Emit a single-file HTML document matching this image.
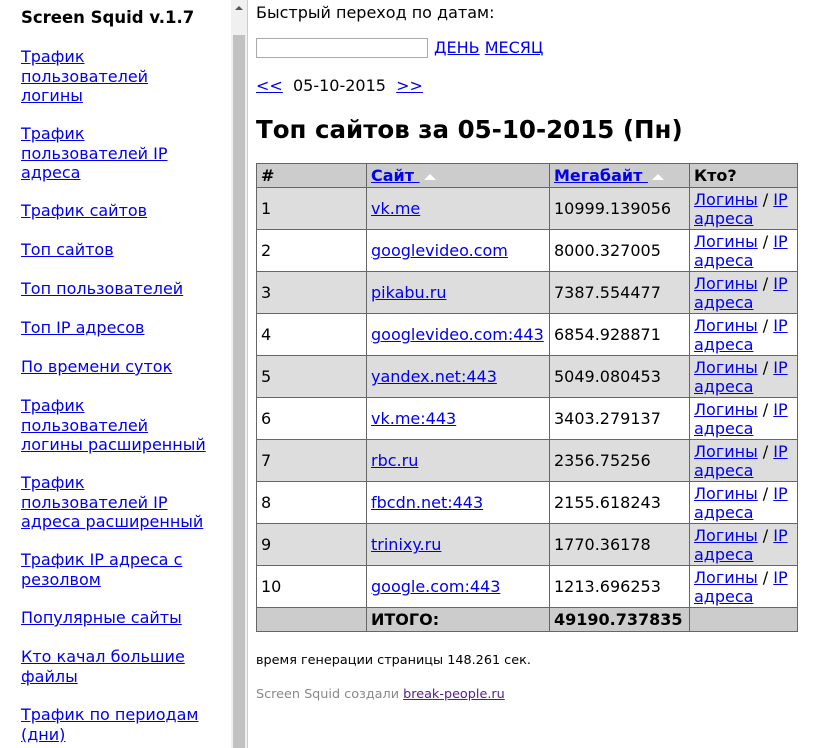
<!DOCTYPE html>
<html><head><meta charset="utf-8"><style>
body{margin:0;width:820px;height:748px;overflow:hidden;font-family:Verdana,"DejaVu Sans",sans-serif;font-size:16px;color:#000;background:#fff;position:relative}
a{color:#0000ee}
#side{position:absolute;left:0;top:0;width:231px;height:748px}
#side h3{position:absolute;left:21px;top:8px;margin:0;font-size:16.5px;white-space:nowrap}
#side .it{position:absolute;left:21px;line-height:19.5px;white-space:nowrap}
#sb{position:absolute;left:231px;top:0;width:16px;height:748px;background:#f0f0f0;border-right:1px solid #ccc}
#sb .th{position:absolute;left:2px;top:35px;width:12px;height:713px;background:#c1c1c1}
#sb .ar{position:absolute;left:4px;top:6px;width:0;height:0;border-left:4px solid transparent;border-right:4px solid transparent;border-bottom:4px solid #555}
#main{position:absolute;left:256px;top:0;width:560px}
.p{position:absolute;left:0;white-space:nowrap}
input{position:absolute;left:0;top:38px;width:168px;height:16px;border:1px solid #aaa;padding:1px;margin:0}
h2{position:absolute;left:0;top:115px;margin:0;font-size:24.5px;white-space:nowrap}
table{position:absolute;left:0;top:163px;border-collapse:collapse;width:542px}
td,th{border:1px solid #666;padding:1px 4px 0;text-align:left;vertical-align:middle;line-height:19.5px}
th{background:#ccc;height:22px}
tr.r td{height:40px}
tr.a td{background:#ddd}
tr.t td{background:#ccc;font-weight:bold;height:22px}
.tri{display:inline-block;width:0;height:0;border-left:6px solid transparent;border-right:6px solid transparent;border-bottom:6px solid #fff;margin-left:4px;vertical-align:middle}
.f{position:absolute;left:0;font-size:12.8px;white-space:nowrap}
</style></head><body>
<div id="side">
<h3>Screen Squid v.1.7</h3>
<div class="it" style="top:47px"><a href="#">Трафик<br>пользователей<br>логины</a></div>
<div class="it" style="top:124px"><a href="#">Трафик<br>пользователей IP<br>адреса</a></div>
<div class="it" style="top:201px"><a href="#">Трафик сайтов</a></div>
<div class="it" style="top:240px"><a href="#">Топ сайтов</a></div>
<div class="it" style="top:279px"><a href="#">Топ пользователей</a></div>
<div class="it" style="top:318px"><a href="#">Топ IP адресов</a></div>
<div class="it" style="top:357px"><a href="#">По времени суток</a></div>
<div class="it" style="top:396px"><a href="#">Трафик<br>пользователей<br>логины расширенный</a></div>
<div class="it" style="top:473px"><a href="#">Трафик<br>пользователей IP<br>адреса расширенный</a></div>
<div class="it" style="top:550px"><a href="#">Трафик IP адреса с<br>резолвом</a></div>
<div class="it" style="top:608px"><a href="#">Популярные сайты</a></div>
<div class="it" style="top:647px"><a href="#">Кто качал большие<br>файлы</a></div>
<div class="it" style="top:705px"><a href="#">Трафик по периодам<br>(дни)</a></div>
</div>
<div id="sb"><div class="ar"></div><div class="th"></div></div>
<div id="main">
<div class="p" style="top:3px">Быстрый переход по датам:</div>
<input type="text">
<div class="p" style="left:178px;top:38px"><a href="#">ДЕНЬ</a> <a href="#">МЕСЯЦ</a></div>
<div class="p" style="top:76px"><a href="#">&lt;&lt;</a>&nbsp; 05-10-2015 &nbsp;<a href="#">&gt;&gt;</a></div>
<h2>Топ сайтов за 05-10-2015 (Пн)</h2>
<table>
<colgroup><col style="width:110px"><col style="width:183px"><col style="width:140px"><col></colgroup>
<tr><th>#</th><th><a href="#">Сайт&nbsp;</a><span class="tri"></span></th><th><a href="#">Мегабайт&nbsp;</a><span class="tri"></span></th><th>Кто?</th></tr>
<tr class="r a"><td>1</td><td><a href="#">vk.me</a></td><td>10999.139056</td><td><a href="#">Логины</a> / <a href="#">IP<br>адреса</a></td></tr>
<tr class="r"><td>2</td><td><a href="#">googlevideo.com</a></td><td>8000.327005</td><td><a href="#">Логины</a> / <a href="#">IP<br>адреса</a></td></tr>
<tr class="r a"><td>3</td><td><a href="#">pikabu.ru</a></td><td>7387.554477</td><td><a href="#">Логины</a> / <a href="#">IP<br>адреса</a></td></tr>
<tr class="r"><td>4</td><td><a href="#">googlevideo.com:443</a></td><td>6854.928871</td><td><a href="#">Логины</a> / <a href="#">IP<br>адреса</a></td></tr>
<tr class="r a"><td>5</td><td><a href="#">yandex.net:443</a></td><td>5049.080453</td><td><a href="#">Логины</a> / <a href="#">IP<br>адреса</a></td></tr>
<tr class="r"><td>6</td><td><a href="#">vk.me:443</a></td><td>3403.279137</td><td><a href="#">Логины</a> / <a href="#">IP<br>адреса</a></td></tr>
<tr class="r a"><td>7</td><td><a href="#">rbc.ru</a></td><td>2356.75256</td><td><a href="#">Логины</a> / <a href="#">IP<br>адреса</a></td></tr>
<tr class="r"><td>8</td><td><a href="#">fbcdn.net:443</a></td><td>2155.618243</td><td><a href="#">Логины</a> / <a href="#">IP<br>адреса</a></td></tr>
<tr class="r a"><td>9</td><td><a href="#">trinixy.ru</a></td><td>1770.36178</td><td><a href="#">Логины</a> / <a href="#">IP<br>адреса</a></td></tr>
<tr class="r"><td>10</td><td><a href="#">google.com:443</a></td><td>1213.696253</td><td><a href="#">Логины</a> / <a href="#">IP<br>адреса</a></td></tr>
<tr class="t"><td></td><td>ИТОГО:</td><td>49190.737835</td><td></td></tr>
</table>
<div class="f" style="top:653px">время генерации страницы 148.261 сек.</div>
<div class="f" style="top:687px;color:#888">Screen Squid создали <a href="#" style="color:#551a8b">break-people.ru</a></div>
</div>
</body></html>
